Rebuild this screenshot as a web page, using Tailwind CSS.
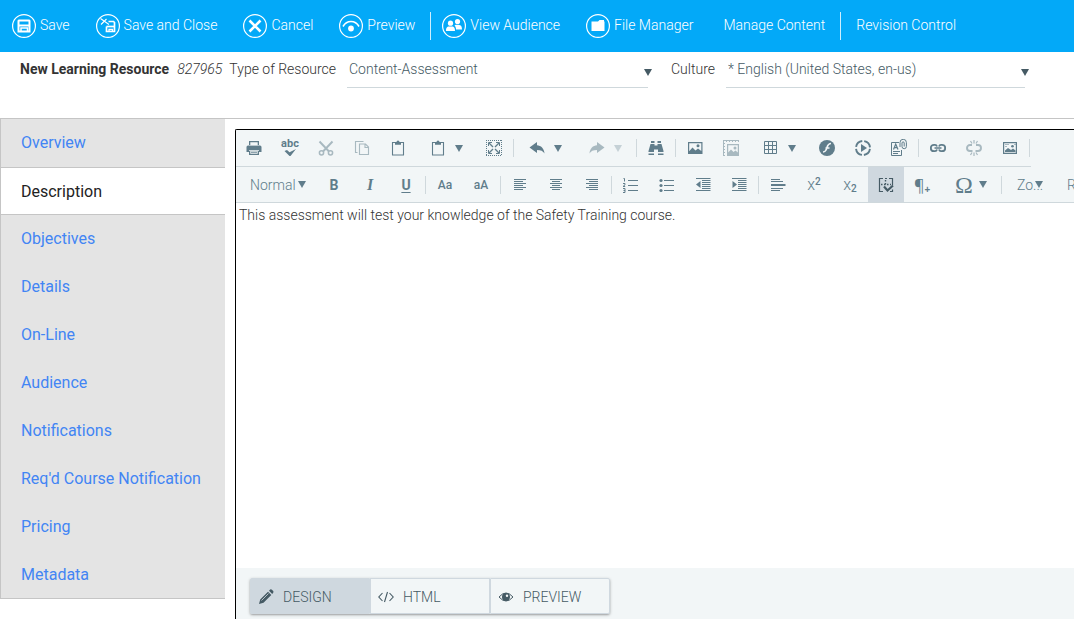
<!DOCTYPE html>
<html lang="en">
<head>
    <meta charset="UTF-8">
    <meta name="viewport" content="width=device-width, initial-scale=1.0">
    <title>New Learning Resource</title>
    <script src="https://cdn.jsdelivr.net/npm/@tailwindcss/browser@4"></script>
</head>
<body class="h-screen flex flex-col overflow-hidden bg-white text-sm font-light text-[#333] font-['Roboto','Liberation_Sans',sans-serif]">
    <!-- Icons shared by more than one button -->
    <svg class="hidden">
        <symbol id="caret" viewBox="0 0 8 7"><path d="M0 0h8L4 7z"/></symbol>
        <symbol id="clip" viewBox="0 0 16 16"><path d="M2.500 2.500h11v12.500h-11z" fill="none" stroke="#607d8b" stroke-width="1.100"/><path d="M5 2h1.500a1.500 1.500 0 0 1 3 0H11v2.800H5z"/></symbol>
    </svg>

    <!-- Action bar -->
    <nav class="h-[52px] shrink-0 flex items-center bg-[#03a9f8] pl-3 pb-px text-white whitespace-nowrap">
        <div class="flex items-center gap-[26px]">
            <button class="flex items-center gap-1">
                <svg class="size-6 shrink-0" viewBox="0 0 24 24" fill="none" stroke="currentColor"><circle cx="12" cy="12" r="11.400" stroke-width="1.200"/><path d="M7 6.500h10l.5.5v10.500h-11V7z" stroke-width="2"/><path d="M7 11.500h10" stroke-width="2"/><path d="M9 18v-4h6.500v4" stroke-width="1.500"/></svg>
                <span class="pb-0.5">Save</span>
            </button>
            <button class="flex items-center gap-1">
                <svg class="size-6 shrink-0" viewBox="0 0 24 24" fill="none" stroke="currentColor"><circle cx="12" cy="12" r="11.400" stroke-width="1.200"/><path d="M4.500 4.500l8.500 6M5 10.500l5.500-5.500" stroke-width="1.100"/><path d="M12.500 7.500h5l1 1v9h-8v-5" stroke-width="1.700"/><path d="M10.500 12.500h8" stroke-width="1.700"/><path d="M13 18v-2.500h3.500V18" stroke-width="1.300"/></svg>
                <span class="pb-0.5">Save and Close</span>
            </button>
            <button class="flex items-center gap-1">
                <svg class="size-6 shrink-0" viewBox="0 0 24 24" fill="none" stroke="currentColor"><circle cx="12" cy="12" r="11.400" stroke-width="1.200"/><path d="M6.500 6.500l11 11M17.500 6.500l-11 11" stroke-width="2.600"/></svg>
                <span class="pb-0.5">Cancel</span>
            </button>
            <button class="flex items-center gap-1">
                <svg class="size-6 shrink-0" viewBox="0 0 24 24" fill="none" stroke="currentColor"><circle cx="12" cy="12" r="11.400" stroke-width="1.200"/><path d="M4 12.500C6 9 9 7.500 12 7.500s6 1.500 8 5" stroke-width="1.600"/><circle cx="12" cy="14.500" r="2.900" fill="currentColor" stroke="none"/></svg>
                <span class="pb-0.5">Preview</span>
            </button>
        </div>
        <div class="ml-[15px] h-7 w-px bg-white/80"></div>
        <div class="ml-[11px] flex items-center gap-[26px]">
            <button class="flex items-center gap-1">
                <svg class="size-6 shrink-0" viewBox="0 0 24 24" fill="currentColor"><circle cx="12" cy="12" r="11.400" fill="none" stroke="currentColor" stroke-width="1.200"/><circle cx="8.500" cy="9.200" r="2.600"/><path d="M4 17c0-5 2.500-4.500 4.500-4.500S13 12 13 17z"/><circle cx="15.500" cy="7.500" r="2.600"/><path d="M12.500 11.500c1-.8 2-.7 3-.7 2.500 0 4.500.5 4.500 4.700h-6c0-1.800-.5-3-1.500-4z"/></svg>
                <span class="pb-0.5">View Audience</span>
            </button>
            <button class="flex items-center gap-1">
                <svg class="size-6 shrink-0" viewBox="0 0 24 24" fill="currentColor"><circle cx="12" cy="12" r="11.400" fill="none" stroke="currentColor" stroke-width="1.200"/><path d="M5.500 7.500h6.500l1.500-1.500h4.500v1.500h.5v9.500h-13z"/></svg>
                <span class="pb-0.5">File Manager</span>
            </button>
        </div>
        <button class="ml-[30px] pb-0.5">Manage Content</button>
        <div class="ml-[15px] h-7 w-px bg-white/80"></div>
        <button class="ml-[15px] pb-0.5">Revision Control</button>
    </nav>

    <!-- Resource header -->
    <header class="h-[67px] shrink-0 flex items-start border-b border-[#c5c5c5] pl-5 leading-[34px] whitespace-nowrap">
        <div class="flex">
            <strong class="font-bold">New Learning Resource</strong>
            <em class="ml-2">827965</em>
            <label for="type" class="ml-[7px]">Type of Resource</label>
        </div>
        <div class="relative ml-[11px] w-[301px]">
            <select id="type" class="block h-9 w-full appearance-none border-b border-[#cfd8dc] pb-0.5 pl-0.5 text-[#455a64] outline-none">
                <option>Content-Assessment</option>
            </select>
            <svg class="pointer-events-none absolute -right-1 top-[17px] w-2 h-[7px] fill-[#455a64]"><use href="#caret"/></svg>
        </div>
        <label for="culture" class="ml-[23px]">Culture</label>
        <div class="relative ml-[11px] w-[299px]">
            <select id="culture" class="block h-9 w-full appearance-none border-b border-[#cfd8dc] pb-0.5 pl-0.5 text-[#455a64] outline-none">
                <option>* English (United States, en-us)</option>
            </select>
            <svg class="pointer-events-none absolute -right-1 top-[17px] w-2 h-[7px] fill-[#455a64]"><use href="#caret"/></svg>
        </div>
    </header>

    <main class="flex min-h-0 flex-1">
        <!-- Section menu -->
        <aside class="w-[225px] shrink-0 self-start border-l border-[#c5c5c5] bg-[#e4e4e4] text-base font-normal text-[#4285f4]">
            <a href="#" class="flex h-12 items-center pl-5">Overview</a>
            <a href="#" class="flex h-12 items-center border-y border-[#c5c5c5] bg-white pl-5 pt-0.5 text-[#222]">Description</a>
            <a href="#" class="flex h-12 items-center pl-5">Objectives</a>
            <a href="#" class="flex h-12 items-center pl-5">Details</a>
            <a href="#" class="flex h-12 items-center pl-5">On-Line</a>
            <a href="#" class="flex h-12 items-center pl-5">Audience</a>
            <a href="#" class="flex h-12 items-center pl-5">Notifications</a>
            <a href="#" class="flex h-12 items-center pl-5">Req'd Course Notification</a>
            <a href="#" class="flex h-12 items-center pl-5">Pricing</a>
            <a href="#" class="flex h-12 items-center border-b border-[#c5c5c5] pl-5">Metadata</a>
        </aside>

        <!-- Rich text editor -->
        <section class="ml-2.5 mt-2.5 flex min-w-0 flex-1 flex-col overflow-hidden rounded-tl-xs border-l border-t border-black">
            <div class="shrink-0 border-b border-[#cfd8dc] bg-[#f2f6f7] fill-[#607d8b] text-[#607d8b]">
                <div class="flex h-[37px] w-[795px] items-stretch border-b border-[#cfd8dc]">
                    <button aria-label="Print" class="flex w-9 items-center justify-center"><svg class="size-4" viewBox="0 0 16 16"><path d="M3 1h10v4H3zM2 5.500h12q1.500 0 1.500 1.500v5H13v-2H3v2H.5V7Q.5 5.500 2 5.500zM3 10h10v5H3z"/><path d="M4.300 2.300h7.400v3H4.300zM3 10.200h10V11H3zM4.300 11h7.400v2.800H4.300z" fill="#f2f6f7"/><path d="M5 12.200h6" stroke="#607d8b"/></svg></button>
                    <button aria-label="Spell check" class="flex w-9 items-center justify-center"><svg class="size-[18px] overflow-visible" viewBox="0 0 18 18"><text x="9" y="8" text-anchor="middle" font-size="11" font-weight="700" letter-spacing="0">abc</text><path d="M3.500 12l2.500-1 2.500 2.300 6.500-3.300L9.500 17H8.500z"/></svg></button>
                    <button aria-label="Cut" disabled class="flex w-9 items-center justify-center opacity-50"><svg class="size-4" viewBox="0 0 16 16" fill="none" stroke="#607d8b" stroke-width="1.500"><path d="M1.500 1.500l9.500 10M14.500 1.500L5 11.500" stroke-width="1.900"/><circle cx="3.500" cy="12.800" r="2.100"/><circle cx="12.500" cy="12.800" r="2.100"/></svg></button>
                    <button aria-label="Copy" disabled class="flex w-9 items-center justify-center opacity-50"><svg class="size-4" viewBox="0 0 16 16" fill="none" stroke="#607d8b" stroke-width="1.100"><path d="M3.500 12.500h-2v-11h8M5.500 4h6l3 3v7.500h-9zM11 4v3.500h3.500"/></svg></button>
                    <button aria-label="Paste" class="flex w-9 items-center justify-center"><svg class="size-4"><use href="#clip"/></svg></button>
                    <button aria-label="Paste options" class="flex w-[60px] items-center gap-[9px] pl-3.5"><svg class="size-4"><use href="#clip"/></svg><svg class="w-2 h-[7px]"><use href="#caret"/></svg></button>
                    <button aria-label="Full screen" class="flex w-9 items-center justify-center"><svg class="size-4" viewBox="0 0 16 16" fill="none" stroke="#607d8b"><path d="M0 .5h16M0 15.500h16M.5 0v16M15.500 0v16" stroke-dasharray="1 1"/><path d="M3 3l4 4M13 3L9 7M3 13l4-4M13 13L9 9" stroke-width="1.300"/><path d="M2.500 6V2.500H6M10 2.500h3.500V6M13.500 10v3.500H10M6 13.500H2.500V10"/></svg></button>
                    <span class="mx-px h-[18px] w-px self-center bg-[#cfd8dc]"></span>
                    <button aria-label="Undo" class="flex w-[60px] items-center gap-[9px] pl-3.5"><svg class="size-4" viewBox="0 0 16 16"><path d="M.5 7.500L8 2v3.300c4 .3 7 3 7.500 8.200-1.500-2.500-3.500-3.500-7.500-3.500V13z"/></svg><svg class="w-2 h-[7px]"><use href="#caret"/></svg></button>
                    <button aria-label="Redo" disabled class="flex w-[60px] items-center gap-[9px] pl-3.5 opacity-50"><svg class="size-4" viewBox="0 0 16 16"><path d="M15.500 7.500L8 2v3.300c-4 .3-7 3-7.500 8.200 1.500-2.500 3.500-3.500 7.500-3.500V13z"/></svg><svg class="w-2 h-[7px] opacity-60"><use href="#caret"/></svg></button>
                    <span class="mx-px h-[18px] w-px self-center bg-[#cfd8dc]"></span>
                    <button aria-label="Find and replace" class="flex w-9 items-center justify-center"><svg class="size-4" viewBox="0 0 16 16"><path d="M3 1h3.500v2H3zM9.500 1H13v2H9.500zM2.500 4h4v1.500h3V4h4L15.500 11v1H10V9.500H6V12H.5v-1zM.5 13.500H6V15H.5zM10 13.500h5.500V15H10z"/></svg></button>
                    <span class="mx-px h-[18px] w-px self-center bg-[#cfd8dc]"></span>
                    <button aria-label="Insert image" class="flex w-9 items-center justify-center"><svg class="size-4" viewBox="0 0 16 16"><path d="M1 2h14.500v12H1zM2.200 3.200v8l3.300-3.700 3 3 2.500-2 3.300 2.500V3.200z" fill-rule="evenodd"/><circle cx="11" cy="5.800" r="1.500"/></svg></button>
                    <button aria-label="Image map" disabled class="flex w-9 items-center justify-center opacity-50"><svg class="size-4" viewBox="0 0 16 16"><path d="M0 .5h16M.5 0v16" fill="none" stroke="#607d8b"/><path d="M3 1.500h13M1.500 3v13" fill="none" stroke="#607d8b" stroke-dasharray="1 2"/><path d="M4 4h12v12H4zM5.200 5.200v7.300l2.800-3 2.500 2.500 2-1.500 2.300 2V5.200z" fill-rule="evenodd"/><circle cx="12" cy="8" r="1.500"/></svg></button>
                    <button aria-label="Insert table" class="flex w-[60px] items-center gap-[9px] pl-3.5"><svg class="size-4" viewBox="0 0 16 16" fill="none" stroke="#607d8b"><path d="M1.500 1.500h12v12h-12zM1.500 5.500h12M1.500 9.500h12M5.500 1.500v12M9.500 1.500v12"/></svg><svg class="w-2 h-[7px]"><use href="#caret"/></svg></button>
                    <button aria-label="Flash" class="flex w-9 items-center justify-center"><svg class="size-4" viewBox="0 0 16 16"><circle cx="8" cy="8" r="8"/><path d="M12 3.500c-4 0-3.500 4-5 6.500-.7 1.500-1.500 2-3 2M6.500 8H10.500" fill="none" stroke="#f2f6f7" stroke-width="1.700"/></svg></button>
                    <button aria-label="Insert media" class="flex w-9 items-center justify-center"><svg class="size-4" viewBox="0 0 16 16"><circle cx="8" cy="8" r="7" fill="none" stroke="#607d8b" stroke-width="1.900" stroke-dasharray="9 2" stroke-dashoffset="-1"/><path d="M6 4l6 4-6 4z"/></svg></button>
                    <button aria-label="Insert document" class="flex w-9 items-center justify-center"><svg class="size-[18px]" viewBox="0 0 18 18" fill="none" stroke="#607d8b"><path d="M9 3.500H1.500v13h10V11M3 12.500h7M3 14.500h5"/><path d="M3.500 10.500L5.700 5l2.300 5.500M4.300 8.700h3" stroke-width="1.200"/><path d="M10 8V3.500a3.200 3.200 0 0 1 6.400 0v4a2.200 2.200 0 0 1-4.400 0V4a1.100 1.100 0 0 1 2.200 0v3.500"/></svg></button>
                    <span class="mx-px h-[18px] w-px self-center bg-[#cfd8dc]"></span>
                    <button aria-label="Insert link" class="flex w-9 items-center justify-center"><svg class="size-4" viewBox="0 0 16 16" fill="none" stroke="#607d8b"><path d="M7 6.500Q6.500 4.800 5 4.800H4a3.200 3.200 0 0 0 0 6.400h1q1.500 0 2-1.700M9 6.500q.5-1.700 2-1.700h1a3.200 3.200 0 0 1 0 6.400h-1q-1.500 0-2-1.700" stroke-width="1.800"/><path d="M4.500 8h7" stroke-width="1.600"/></svg></button>
                    <button aria-label="Remove link" disabled class="flex w-9 items-center justify-center opacity-50"><svg class="size-4" viewBox="0 0 16 16" fill="none" stroke="#607d8b" stroke-width="1.900"><path d="M6 5H4a3 3 0 0 0 0 6h2.500M10 5h2a3 3 0 0 1 0 6H9.500"/><path d="M8 0v3.500M4.500 1l1.500 2.500M11.500 1L10 3.500M8 16v-3.500M4.500 15L6 12.500M11.500 15L10 12.500" stroke-width="1.200"/></svg></button>
                    <button aria-label="Image editor" class="flex w-9 items-center justify-center"><svg class="size-4" viewBox="0 0 16 16"><path d="M1 2h14v12H1zM2.200 3.200v9.600h11.600V3.200z" fill-rule="evenodd"/><path d="M3 12v-1.500L6 8l3 2 2-1.500 2.500 2V12z"/><circle cx="10.500" cy="6.300" r="1.300"/><path d="M3.500 4.500h3M3.500 6.500h2M12.500 4.500h1" fill="none" stroke="#607d8b" stroke-dasharray="1 1"/></svg></button>
                    <span class="mx-px h-[18px] w-px self-center bg-[#cfd8dc]"></span>
                </div>
                <div class="flex h-[35px] items-stretch whitespace-nowrap">
                    <button class="flex w-20 shrink-0 items-center pl-3.5">Normal<svg class="ml-0.5 w-2 h-[7px]"><use href="#caret"/></svg></button>
                    <button aria-label="Bold" class="w-9 shrink-0 font-bold">B</button>
                    <button aria-label="Italic" class="w-9 shrink-0 font-['Liberation_Serif',serif] text-base font-bold italic">I</button>
                    <button aria-label="Underline" class="w-9 shrink-0 font-bold underline underline-offset-2">U</button>
                    <span class="mx-px h-[18px] w-px shrink-0 self-center bg-[#cfd8dc]"></span>
                    <button aria-label="Capitalize" class="w-9 shrink-0 text-xs font-medium">Aa</button>
                    <button aria-label="Toggle case" class="w-9 shrink-0 text-xs font-medium">aA</button>
                    <span class="mx-px h-[18px] w-px shrink-0 self-center bg-[#cfd8dc]"></span>
                    <button aria-label="Align left" class="flex w-9 shrink-0 items-center justify-center"><svg class="size-4" viewBox="0 0 16 16" stroke="#607d8b"><path d="M2 2.500h12M2 4.500h9M2 6.500h12M2 8.500h9M2 10.500h12M2 12.500h9"/></svg></button>
                    <button aria-label="Align center" class="flex w-9 shrink-0 items-center justify-center"><svg class="size-4" viewBox="0 0 16 16" stroke="#607d8b"><path d="M2 2.500h12M4 4.500h8M2 6.500h12M4 8.500h8M2 10.500h12M4 12.500h8"/></svg></button>
                    <button aria-label="Align right" class="flex w-9 shrink-0 items-center justify-center"><svg class="size-4" viewBox="0 0 16 16" stroke="#607d8b"><path d="M2 2.500h12M5 4.500h9M2 6.500h12M5 8.500h9M2 10.500h12M5 12.500h9"/></svg></button>
                    <span class="mx-px h-[18px] w-px shrink-0 self-center bg-[#cfd8dc]"></span>
                    <button aria-label="Numbered list" class="flex w-9 shrink-0 items-center justify-center"><svg class="size-4" viewBox="0 0 16 16"><path d="M5 3.500h10M5 8.500h10M5 13.500h10" stroke="#607d8b"/><path d="M.5 1.500h1v3M0 6.500h2v1.300L0 9.500h2.200M0 11.500h2v4H0M.5 13.500H2" fill="none" stroke="#607d8b"/></svg></button>
                    <button aria-label="Bulleted list" class="flex w-9 shrink-0 items-center justify-center"><svg class="size-4" viewBox="0 0 16 16"><path d="M5 3.500h10M5 8.500h10M5 13.500h10" stroke="#607d8b"/><circle cx="2" cy="3.500" r="1.600"/><circle cx="2" cy="8.500" r="1.600"/><circle cx="2" cy="13.500" r="1.600"/></svg></button>
                    <button aria-label="Outdent" class="flex w-9 shrink-0 items-center justify-center"><svg class="size-4" viewBox="0 0 16 16"><path d="M1 1.500h14.500M7 3.500h8.500M7 5.500h8.500M7 7.500h8.500M7 9.500h8.500M7 11.500h8.500M1 13.500h14.500" stroke="#607d8b"/><path d="M5.500 4v7L1 7.500z"/></svg></button>
                    <button aria-label="Indent" class="flex w-9 shrink-0 items-center justify-center"><svg class="size-4" viewBox="0 0 16 16"><path d="M1 1.500h14.500M7 3.500h8.500M7 5.500h8.500M7 7.500h8.500M7 9.500h8.500M7 11.500h8.500M1 13.500h14.500" stroke="#607d8b"/><path d="M1.500 4v7L6 7.500z"/></svg></button>
                    <span class="mx-px h-[18px] w-px shrink-0 self-center bg-[#cfd8dc]"></span>
                    <button aria-label="Insert horizontal rule" class="flex w-9 shrink-0 items-center justify-center"><svg class="size-4" viewBox="0 0 16 16" stroke="#607d8b"><path d="M1 2.500h9M1 4.500h12M1 11.500h12M1 13.500h9"/><path d="M1 8h14.500" stroke-width="2"/></svg></button>
                    <button aria-label="Superscript" class="w-9 shrink-0 text-base font-light">x<sup class="text-[10px] font-medium">2</sup></button>
                    <button aria-label="Subscript" class="w-9 shrink-0 text-base font-light">x<sub class="text-[10px] font-medium">2</sub></button>
                    <button aria-label="Show borders" aria-pressed="true" class="flex w-9 shrink-0 items-center justify-center bg-[#cfd8df]"><svg class="size-4" viewBox="0 0 16 16" fill="none" stroke="#455a64"><path d="M5 14.500H1.500v-13H5M11 1.500h3.500V8M14.500 12.500v2H12M7 1.500h2" stroke-width="1.200"/><path d="M3 7.500h10M7.500 3v6" stroke-width="1.400" stroke-dasharray="1.500 1.500"/><path d="M6 9.500l3.500 4L15 8.500" stroke-width="2.200"/></svg></button>
                    <button aria-label="Paragraph" class="w-9 shrink-0 font-['Open_Sans',sans-serif] text-base font-normal">¶<sub class="text-[10px] font-bold">+</sub></button>
                    <button aria-label="Insert symbol" class="flex w-[60px] shrink-0 items-center gap-[5px] pl-3.5 font-['Liberation_Serif',serif] text-2xl font-normal"><span class="w-5 text-center">Ω</span><svg class="w-2 h-[7px]"><use href="#caret"/></svg></button>
                    <span class="mx-px h-[18px] w-px shrink-0 self-center bg-[#cfd8dc]"></span>
                    <button class="flex w-[50px] shrink-0 items-center pl-3.5">Zo...<svg class="-ml-2 w-2 h-[7px] shrink-0"><use href="#caret"/></svg></button>
                    <button class="shrink-0 pl-3.5">R</button>
                </div>
            </div>

            <textarea aria-label="Description" class="block min-h-0 w-full flex-1 resize-none px-[3px] py-0.5 outline-none">This assessment will test your knowledge of the Safety Training course.</textarea>

            <!-- Mode switch -->
            <div class="flex h-[51px] shrink-0 items-start bg-[#f2f6f7] pl-3.5 pt-2.5">
                <div class="flex h-9 rounded-xs text-[#455a64] shadow-sm shadow-black/30">
                    <button aria-pressed="true" class="flex w-[120px] items-center gap-[9px] rounded-l-xs border border-[#cfd8df] bg-[#cfd8df] pl-[7px] pt-0.5"><svg class="size-4" viewBox="0 0 16 16" fill="#455a64"><path d="M1 15l1.200-4.500L10 2.700 13.300 6 5.500 13.800zM11 1.700L12.200.5q1-.5 2 .5l1 1q.8 1-.2 2L14.200 5z"/><path d="M3.500 11.500L10.500 4.500" stroke="#cfd8df" stroke-width=".8"/></svg>DESIGN</button>
                    <button class="flex w-[120px] items-center gap-[9px] border border-[#cfd8df] pl-[7px] pt-0.5"><svg class="size-4" viewBox="0 0 16 16" fill="none" stroke="#455a64" stroke-width="1.100"><path d="M4.500 4L.8 8l3.700 4M11.500 4l3.700 4-3.700 4M9.500 3l-3 10"/></svg>HTML</button>
                    <button class="flex w-[120px] items-center gap-[9px] rounded-r-xs border border-[#cfd8df] pl-[7px] pt-0.5"><svg class="size-4" viewBox="0 0 16 16" fill="#455a64"><path d="M1 8q7-8 14 0-7 8-14 0z" fill="none" stroke="#455a64"/><circle cx="8" cy="8" r="4"/><circle cx="9" cy="6.800" r="1.200" fill="#f2f6f7"/></svg>PREVIEW</button>
                </div>
            </div>
        </section>
    </main>
</body>
</html>
